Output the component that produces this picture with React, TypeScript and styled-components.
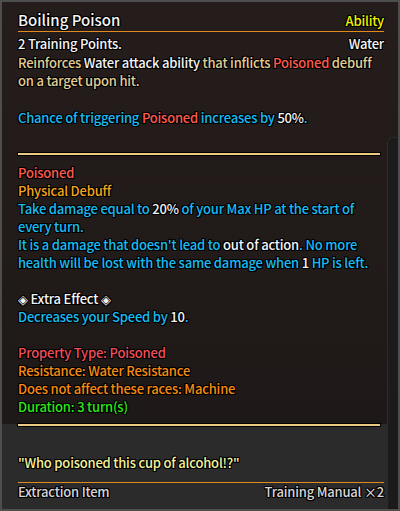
import styled, { createGlobalStyle } from "styled-components";

const GlobalStyle = createGlobalStyle`
  html, body {
    margin: 0;
    padding: 0;
    background: #1a1a1a;
  }
`;

const c = {
  white: "#f4f4f4",
  beige: "#e4cd92",
  red: "#ff5a4c",
  cyan: "#18bcf2",
  orange: "#f4a41c",
  propRed: "#f04e58",
  resOrange: "#f78b10",
  green: "#30e41a",
  yellow: "#f4f000",
  quote: "#f4f29a",
  gray: "#d6d6d6",
};

const outline =
  "1px 0 0 #000, -1px 0 0 #000, 0 1px 0 #000, 0 -1px 0 #000, 1px 1px 0 #000, -1px -1px 0 #000, 1px -1px 0 #000, -1px 1px 0 #000";

const Panel = styled.div`
  position: relative;
  width: 400px;
  height: 511px;
  box-sizing: border-box;
  border: 2px solid #4e4e4e;
  background: linear-gradient(180deg, #251d1b 0%, #201a18 60%, #1c1818 100%);
  display: flex;
  flex-direction: column;
  font-family: "Noto Sans CJK KR", "Noto Sans", sans-serif;
  font-size: 13px;
  font-weight: 500;
  letter-spacing: -0.2px;
  line-height: 18px;
  color: ${c.white};
  text-shadow: ${outline};
  overflow: hidden;
`;

const Track = styled.div`
  position: absolute;
  right: 1px;
  top: 135px;
  bottom: 2px;
  width: 9px;
  background: #1b1b1b;
  border-left: 1px solid #2c2c2c;
  border-top: 1px solid #2c2c2c;
  border-top-left-radius: 6px;
`;

const Body = styled.div`
  padding: 0 14px 0 16px;
`;

const Row = styled.div<{ $line?: boolean }>`
  display: flex;
  justify-content: space-between;
  align-items: baseline;
  ${({ $line }) => ($line ? "border-bottom: 1px solid #e38a1c;" : "")}
`;

const Title = styled.div`
  font-size: 15px;
  letter-spacing: 0;
  line-height: 20px;
  padding: 8px 0 1px;
`;

const Text = styled.div<{ $color?: string; $gap?: number }>`
  color: ${({ $color }) => $color || c.white};
  margin-top: ${({ $gap }) => $gap || 0}px;
`;

const C = styled.span<{ $color: string }>`
  color: ${({ $color }) => $color};
`;

const Blank = styled.div<{ $h?: number }>`
  height: ${({ $h }) => $h || 18}px;
`;

const GoldRule = styled.div`
  height: 2px;
  background: #ecc980;
  box-shadow: 0 0 0 1px #000;
  margin: 26px 4px 9px 0;
`;

const Footer = styled.div`
  margin-top: auto;
  margin-right: 10px;
  background: #2b2b2b;
  padding: 0 4px 0 16px;
`;

const FooterRule = styled.div`
  height: 2px;
  background: #ecc980;
  box-shadow: 0 0 0 1px #000;
  margin-right: 4px;
`;

const Quote = styled.div`
  color: ${c.quote};
  padding: 28px 0 10px;
  border-bottom: 1px solid #e38a1c;
`;

const Meta = styled.div`
  display: flex;
  justify-content: space-between;
  color: ${c.gray};
  line-height: 16px;
  padding: 1px 0 9px;
`;

export default function App() {
  return (
    <>
      <GlobalStyle />
      <Panel>
        <Track />
        <Body>
          <Row $line>
            <Title>Boiling Poison</Title>
            <Text $color={c.yellow}>Ability</Text>
          </Row>
          <Row style={{ marginTop: 3 }}>
            <Text>2 Training Points.</Text>
            <Text>Water</Text>
          </Row>
          <Text $color={c.beige} $gap={1}>
            Reinforces <C $color={c.white}>Water attack ability</C> that inflicts{" "}
            <C $color={c.red}>Poisoned</C> debuff on a target upon hit.
          </Text>
          <Blank $h={19} />
          <Text $color={c.cyan}>
            Chance of triggering <C $color={c.red}>Poisoned</C> increases by{" "}
            <C $color={c.white}>50%</C>.
          </Text>
          <GoldRule />
          <Text $color={c.red}>Poisoned</Text>
          <Text $color={c.orange}>Physical Debuff</Text>
          <Text $color={c.cyan}>
            Take damage equal to <C $color={c.white}>20%</C> of your Max HP at the start of every
            turn.
          </Text>
          <Text $color={c.cyan}>
            It is a damage that doesn't lead to <C $color={c.white}>out of action</C>. No more
            health will be lost with the same damage when <C $color={c.white}>1</C> HP is left.
          </Text>
          <Blank />
          <Text>◈ Extra Effect ◈</Text>
          <Text $color={c.cyan}>
            Decreases your Speed by <C $color={c.white}>10</C>.
          </Text>
          <Blank />
          <Text $color={c.propRed}>Property Type: Poisoned</Text>
          <Text $color={c.resOrange}>Resistance: Water Resistance</Text>
          <Text $color={c.resOrange}>Does not affect these races: Machine</Text>
          <Text $color={c.green}>Duration: 3 turn(s)</Text>
        </Body>
        <Footer>
          <FooterRule />
          <Quote>"Who poisoned this cup of alcohol!?"</Quote>
          <Meta>
            <span>Extraction Item</span>
            <span>Training Manual ×2</span>
          </Meta>
        </Footer>
      </Panel>
    </>
  );
}
